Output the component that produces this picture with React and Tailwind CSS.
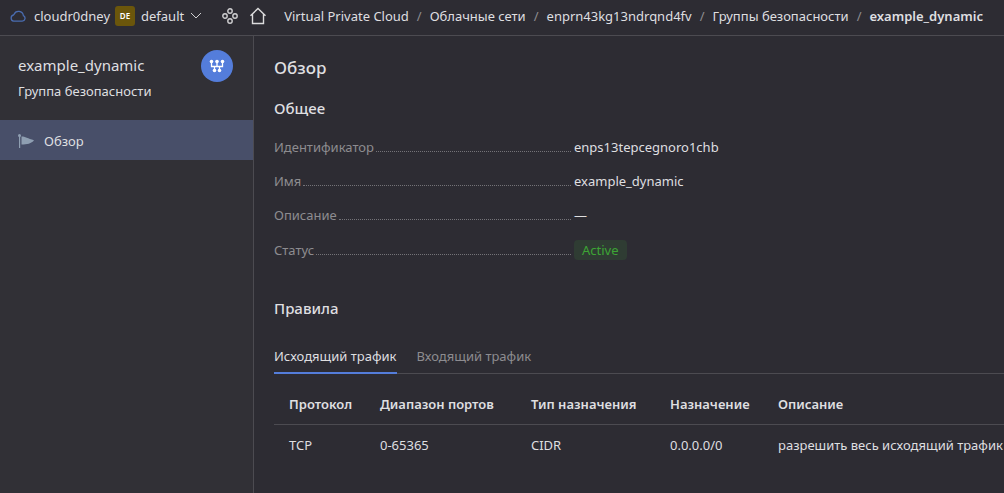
const crumbs = [
  'Virtual Private Cloud',
  'Облачные сети',
  'enprn43kg13ndrqnd4fv',
  'Группы безопасности',
];

function CloudIcon() {
  return (
    <svg width="16" height="12" viewBox="0 0 16 12" fill="none" stroke="#4a6cb0" strokeWidth="1.3" aria-hidden="true">
      <path d="M3.600 11.200h8.600a2.900 2.900 0 0 0 1.200-5.500A4.900 4.900 0 0 0 4 4.400a1 1 0 0 1-.5.6 3.200 3.200 0 0 0 .1 6.200z" />
    </svg>
  );
}

function ServicesIcon() {
  return (
    <svg width="16" height="16" viewBox="0 0 16 16" fill="none" stroke="#cfcfd1" strokeWidth="1.4" aria-hidden="true">
      <circle cx="8" cy="3" r="2.200" />
      <circle cx="3" cy="8" r="2.200" />
      <circle cx="13" cy="8" r="2.200" />
      <circle cx="8" cy="13" r="2.200" />
    </svg>
  );
}

function HomeIcon() {
  return (
    <svg width="18" height="18" viewBox="0 0 18 18" fill="none" stroke="#dcdcdd" strokeWidth="1.400" aria-hidden="true">
      <path d="M1.500 8.700 9 1.500l7.500 7.200M3.500 7v9.500h11V7" />
    </svg>
  );
}

function GroupIcon() {
  return (
    <svg width="16" height="16" viewBox="0 0 16 16" fill="none" stroke="#fff" strokeWidth="1.300" aria-hidden="true">
      <path d="M2.500 3.500v5h11v-5M8 3.500v5M5.500 8.500V13M10.500 8.500V13" />
      <g fill="#fff" stroke="none">
        <circle cx="2.500" cy="3.500" r="1.800" />
        <circle cx="8" cy="3.500" r="1.800" />
        <circle cx="13.500" cy="3.500" r="1.800" />
        <circle cx="5.500" cy="12.500" r="1.800" />
        <circle cx="10.500" cy="12.500" r="1.800" />
      </g>
    </svg>
  );
}

function FlagIcon() {
  return (
    <svg width="16" height="14" viewBox="0 0 16 14" fill="#8f9fb2" aria-hidden="true">
      <circle cx="1.500" cy="1.500" r="1.500" />
      <path d="M1 2h1.200v12H1zM3.500 2.500C7 2.500 10 4.500 16 6.200 13.500 9.500 9 10.500 3.500 10.500z" />
    </svg>
  );
}

function Field({ label, children }) {
  return (
    <div className="flex min-h-5 items-center">
      <dt className="flex w-[300px] items-center pr-[3px]">
        <span className="text-[#8d8c90]">{label}</span>
        <span className="ml-[2px] mt-2 flex-1 border-b border-dotted border-[#747378]" />
      </dt>
      <dd>{children}</dd>
    </div>
  );
}

export default function App() {
  return (
    <div className="flex min-h-screen flex-col bg-[#2d2c33] font-['Noto_Sans',sans-serif] text-[13px] leading-5 text-[#dfdfe0]">
      <header className="flex h-9 items-center border-b border-[#4c4b51] pb-1 pl-[10px] whitespace-nowrap">
        <a href="#cloud" className="flex items-center gap-2">
          <CloudIcon />
          cloudr0dney
        </a>
        <button type="button" className="ml-[5px] flex items-center">
          <span className="mr-[6px] flex size-5 items-center justify-center rounded-[3px] bg-[#6b560b] text-[8px] font-semibold text-white">DE</span>
          default
          <svg className="ml-[6px]" width="12" height="7" viewBox="0 0 12 7" fill="none" stroke="#cfcfd1" aria-hidden="true">
            <path d="m1 1 5 5 5-5" />
          </svg>
        </button>
        <button type="button" aria-label="Все сервисы" className="ml-5">
          <ServicesIcon />
        </button>
        <a href="#home" aria-label="Главная" className="ml-[11px]">
          <HomeIcon />
        </a>
        <nav className="ml-[17px] flex">
          {crumbs.map((c) => (
            <span key={c} className="flex">
              <a href="#crumb">{c}</a>
              <span className="mx-2 text-[#8d8c90]">/</span>
            </span>
          ))}
          <span className="font-semibold">example_dynamic</span>
        </nav>
      </header>
      <div className="flex flex-1">
        <aside className="w-[254px] shrink-0 border-r border-[#4c4b51] bg-[#313036]">
          <div className="flex items-start justify-between pt-[14px] pr-5 pb-[19px] pl-[18px]">
            <div>
              <h2 className="mt-[5px] text-[15px] leading-5">example_dynamic</h2>
              <p className="mt-[6px]">Группа безопасности</p>
            </div>
            <span className="flex size-8 items-center justify-center rounded-full bg-[#547ddb]">
              <GroupIcon />
            </span>
          </div>
          <a href="#overview" className="flex h-10 items-center gap-[10px] bg-[#484f69] pt-[2px] pl-[18px]">
            <FlagIcon />
            Обзор
          </a>
        </aside>
        <main className="min-w-0 flex-1 pl-5">
          <h1 className="mt-5 text-[17px] leading-6 font-medium">Обзор</h1>
          <h2 className="mt-[18px] text-[15px] leading-5 font-medium">Общее</h2>
          <dl className="mt-[19px] flex flex-col gap-[14px]">
            <Field label="Идентификатор">enps13tepcegnoro1chb</Field>
            <Field label="Имя">example_dynamic</Field>
            <Field label="Описание">—</Field>
            <Field label="Статус">
              <div className="py-px">
                <span className="block rounded-[4px] bg-[#2f3c33] px-2 text-[#3da535]">Active</span>
              </div>
            </Field>
          </dl>
          <h2 className="mt-[37px] text-[15px] leading-5 font-medium">Правила</h2>
          <div role="tablist" className="mt-5 flex gap-5 border-b border-[#4c4b51]">
            <button type="button" role="tab" aria-selected="true" className="-mb-px h-9 border-b-2 border-[#547ddb] pt-[2px]">
              Исходящий трафик
            </button>
            <button type="button" role="tab" aria-selected="false" className="-mb-px h-9 border-b-2 border-transparent pt-[2px] text-[#8d8c90]">
              Входящий трафик
            </button>
          </div>
          <table className="mt-[10px] w-full text-left whitespace-nowrap">
            <thead>
              <tr className="h-10 border-b border-[#4c4b51]">
                <th className="w-[106px] pl-[15px] font-semibold">Протокол</th>
                <th className="w-[151px] font-semibold">Диапазон портов</th>
                <th className="w-[139px] font-semibold">Тип назначения</th>
                <th className="w-[108px] font-semibold">Назначение</th>
                <th className="font-semibold">Описание</th>
              </tr>
            </thead>
            <tbody>
              <tr className="h-[42px]">
                <td className="pl-[15px]">TCP</td>
                <td>0-65365</td>
                <td>CIDR</td>
                <td>0.0.0.0/0</td>
                <td>разрешить весь исходящий трафик</td>
              </tr>
            </tbody>
          </table>
        </main>
      </div>
    </div>
  );
}
